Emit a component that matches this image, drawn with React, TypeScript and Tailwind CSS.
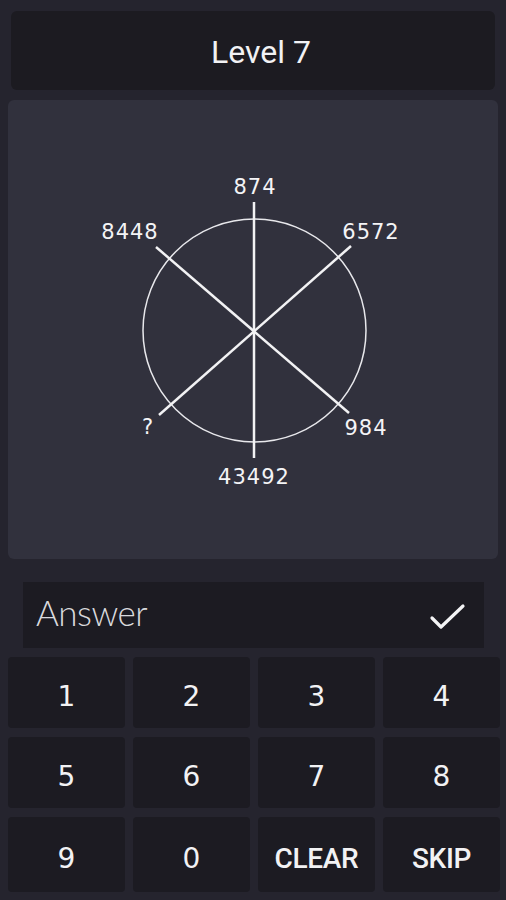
const keys = ["1", "2", "3", "4", "5", "6", "7", "8", "9", "0", "CLEAR", "SKIP"];

const labels = [
  { t: "874", x: 255, y: 194 },
  { t: "8448", x: 130, y: 239 },
  { t: "6572", x: 371, y: 239 },
  { t: "?", x: 148, y: 434 },
  { t: "984", x: 366, y: 435 },
  { t: "43492", x: 254, y: 484 },
];

const Puzzle = () => (
  <svg width="491" height="459" viewBox="8 100 491 459" className="block">
    <circle cx="254.5" cy="330.5" r="111.5" fill="none" stroke="#e8e8ec" strokeWidth="1.5" />
    <g stroke="#f2f2f4" strokeWidth="2.5" strokeLinecap="butt">
      <line x1="254" y1="202" x2="254" y2="458" />
      <line x1="156" y1="247" x2="349" y2="413" />
      <line x1="351" y1="246" x2="159" y2="415" />
    </g>
    {labels.map((l) => (
      <text
        key={l.t}
        x={l.x}
        y={l.y}
        textAnchor="middle"
        fill="#f4f4f6"
        fontSize="21"
        letterSpacing="1"
        fontFamily="'DejaVu Sans', sans-serif"
      >
        {l.t}
      </text>
    ))}
  </svg>
);

export default function App() {
  return (
    <div className="w-[506px] h-[900px] bg-[#25242e] flex flex-col overflow-hidden font-['Roboto',sans-serif]">
      <div className="mx-[11px] mt-[11px] h-[79px] rounded-md bg-[#1c1b21] flex items-center justify-center pt-[3px] pl-[16px]">
        <span className="text-[32px] text-[#f2f2f4]">Level 7</span>
      </div>
      <div className="mx-[8px] mt-[10px] h-[459px] rounded-md bg-[#31313d]">
        <Puzzle />
      </div>
      <div className="ml-[23px] w-[461px] mt-[23px] h-[66px] bg-[#1c1b22] flex items-center justify-between pl-[13px] pr-[18px]">
        <span className="text-[35px] leading-none pb-[6px] text-[#d9d9dd] font-['Lato',sans-serif] font-light tracking-[-0.5px]">Answer</span>
        <svg width="40" height="30" viewBox="0 0 40 30">
          <path d="M6 18 L15 27 L37 6" fill="none" stroke="#f4f4f6" strokeWidth="3.2" strokeLinecap="round" strokeLinejoin="round" />
        </svg>
      </div>
      <div className="ml-[8px] w-[492px] mt-[9px] grid grid-cols-4 gap-x-[8px] gap-y-[9px] grid-rows-[71px_71px_75px]">
        {keys.map((k) => (
          <div key={k} className="rounded-sm bg-[#1c1b22] flex items-center justify-center pt-[8px]">
            <span
              className={
                k.length > 1
                  ? "text-[28px] font-medium text-[#f2f2f4] tracking-[-0.3px]"
                  : "text-[28px] text-[#f2f2f4] font-['DejaVu_Sans',sans-serif]"
              }
            >
              {k}
            </span>
          </div>
        ))}
      </div>
    </div>
  );
}
